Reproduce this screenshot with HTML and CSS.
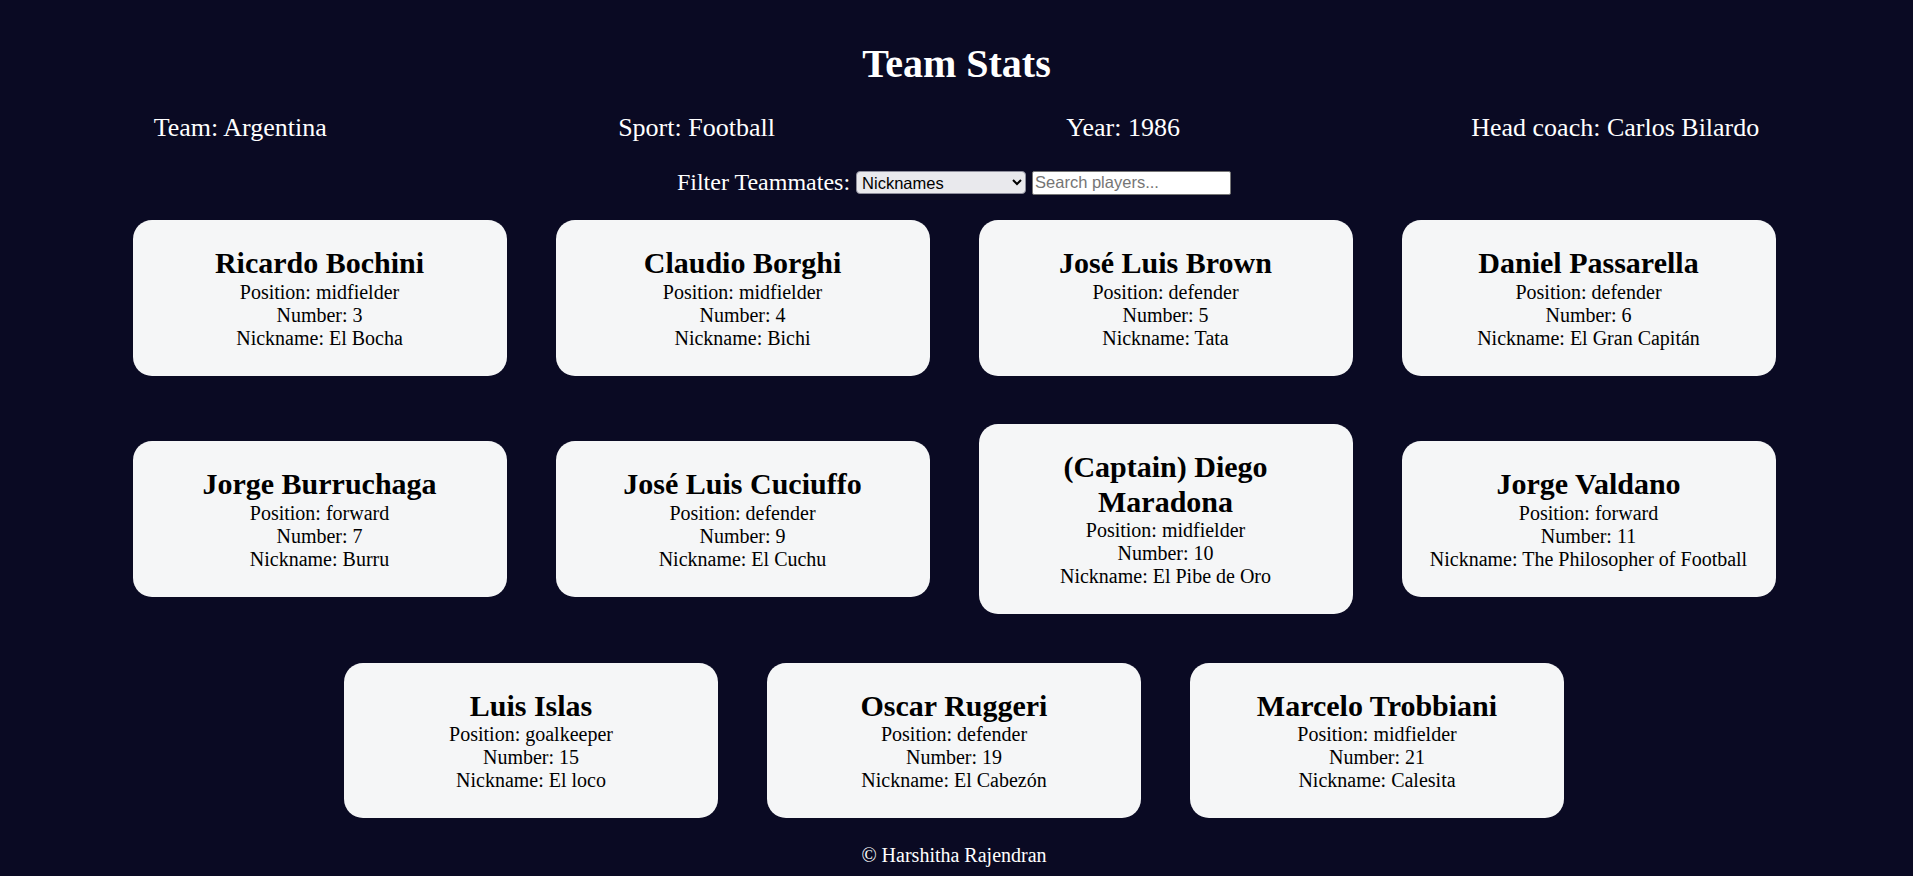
FILE: index.html
```html
<!DOCTYPE html>
<html lang="en">
<head>
<meta charset="utf-8">
<title>Team Stats</title>
<link rel="stylesheet" href="styles.css">
</head>
<body>
<main class="page">
  <h1 class="title">Team Stats</h1>
  <div class="info">
    <p class="info-item">Team: <span>Argentina</span></p>
    <p class="info-item">Sport: <span>Football</span></p>
    <p class="info-item">Year: <span>1986</span></p>
    <p class="info-item">Head coach: <span>Carlos Bilardo</span></p>
  </div>
  <div class="filter">
    <label class="filter-label" for="players">Filter Teammates:</label>
    <select class="filter-select" id="players">
      <option>Nicknames</option>
    </select>
    <input class="filter-search" type="text" placeholder="Search players...">
  </div>
  <div class="cards">
    <div class="card"><h2 class="card-name">Ricardo Bochini</h2><p class="card-line">Position: midfielder</p><p class="card-line">Number: 3</p><p class="card-line">Nickname: El Bocha</p></div>
    <div class="card"><h2 class="card-name">Claudio Borghi</h2><p class="card-line">Position: midfielder</p><p class="card-line">Number: 4</p><p class="card-line">Nickname: Bichi</p></div>
    <div class="card"><h2 class="card-name">José Luis Brown</h2><p class="card-line">Position: defender</p><p class="card-line">Number: 5</p><p class="card-line">Nickname: Tata</p></div>
    <div class="card"><h2 class="card-name">Daniel Passarella</h2><p class="card-line">Position: defender</p><p class="card-line">Number: 6</p><p class="card-line">Nickname: El Gran Capitán</p></div>
    <div class="card"><h2 class="card-name">Jorge Burruchaga</h2><p class="card-line">Position: forward</p><p class="card-line">Number: 7</p><p class="card-line">Nickname: Burru</p></div>
    <div class="card"><h2 class="card-name">José Luis Cuciuffo</h2><p class="card-line">Position: defender</p><p class="card-line">Number: 9</p><p class="card-line">Nickname: El Cuchu</p></div>
    <div class="card"><h2 class="card-name">(Captain) Diego Maradona</h2><p class="card-line">Position: midfielder</p><p class="card-line">Number: 10</p><p class="card-line">Nickname: El Pibe de Oro</p></div>
    <div class="card"><h2 class="card-name">Jorge Valdano</h2><p class="card-line">Position: forward</p><p class="card-line">Number: 11</p><p class="card-line">Nickname: The Philosopher of Football</p></div>
    <div class="card"><h2 class="card-name">Luis Islas</h2><p class="card-line">Position: goalkeeper</p><p class="card-line">Number: 15</p><p class="card-line">Nickname: El loco</p></div>
    <div class="card"><h2 class="card-name">Oscar Ruggeri</h2><p class="card-line">Position: defender</p><p class="card-line">Number: 19</p><p class="card-line">Nickname: El Cabezón</p></div>
    <div class="card"><h2 class="card-name">Marcelo Trobbiani</h2><p class="card-line">Position: midfielder</p><p class="card-line">Number: 21</p><p class="card-line">Nickname: Calesita</p></div>
  </div>
  <footer class="footer">© Harshitha Rajendran</footer>
</main>
</body>
</html>
```
FILE: styles.css
```css
* {
  box-sizing: border-box;
}

html, body {
  margin: 0;
  padding: 0;
  background: #0a0a23;
}

body {
  font-family: "Liberation Serif", "Times New Roman", serif;
  font-size: 20px;
  color: #ffffff;
}

.page {
  padding: 0 8px 20px;
}

.title {
  margin: 40.5px 0 0;
  font-size: 40px;
  font-weight: bold;
  line-height: 46px;
  text-align: center;
}

.info {
  display: flex;
  justify-content: space-around;
  margin-top: 26px;
}

.info-item {
  margin: 0;
  font-size: 26px;
  line-height: 30px;
}

.filter {
  display: flex;
  justify-content: center;
  align-items: center;
  gap: 6px;
  margin-top: 26px;
  padding-right: 5px;
  height: 27px;
  font-size: 24px;
}

.filter-label {
  line-height: 27px;
}

.filter-select {
  width: 170px;
  height: 23px;
  margin: 1px 0 0;
  padding: 0 1px;
  font-family: Arial, "Liberation Sans", sans-serif;
  font-size: 16.5px;
  color: #000;
  background: #e9e9ed;
  border: 1px solid #8f8f9d;
  border-radius: 4px;
}

.filter-search {
  width: 199px;
  height: 24px;
  margin: 1px 0 0;
  padding: 1px 2px;
  font-family: Arial, "Liberation Sans", sans-serif;
  font-size: 16.5px;
  color: #000;
  background: #ffffff;
  border: 1px solid #767676;
  border-radius: 2px;
}

.filter-search::placeholder {
  color: #757575;
}

.cards {
  display: flex;
  flex-wrap: wrap;
  justify-content: center;
  align-items: center;
  gap: 48.5px 49px;
  margin-top: 24.5px;
  padding-right: 5px;
}

.card {
  width: 374px;
  padding: 26px;
  background: #f5f6f7;
  color: #000;
  border-radius: 19px;
  text-align: center;
}

.card-name {
  margin: 0;
  font-size: 30px;
  font-weight: bold;
  line-height: 34.5px;
}

.card-line {
  margin: 0;
  font-size: 20px;
  line-height: 23px;
}

.footer {
  margin-top: 25.5px;
  padding-right: 5px;
  font-size: 20px;
  line-height: 23px;
  text-align: center;
}
```
